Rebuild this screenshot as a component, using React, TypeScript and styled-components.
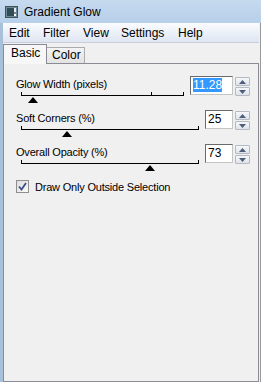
import React from 'react'
import styled, { createGlobalStyle } from 'styled-components'

const GlobalStyle = createGlobalStyle`
	html, body {
		margin: 0;
		padding: 0;
		background: #f0f0f0;
	}
	body {
		font-family: 'Liberation Sans', Arial, sans-serif;
	}
`

const Window = styled.div`
	width: 261px;
	height: 382px;
	display: flex;
	flex-direction: column;
	overflow: hidden;
	background: #f0f0f0;
`

const TitleBar = styled.div`
	height: 23px;
	flex: none;
	display: flex;
	align-items: center;
	gap: 6px;
	padding-left: 5px;
	background: linear-gradient(#c6daef, #b7cfe9);
	font-size: 12px;
	color: #000;
`

const Frame = styled.div`
	flex: 1;
	display: flex;
	flex-direction: column;
	border-left: 3px solid #a9c0da;
	border-right: 1px solid #9a9a9a;
	padding-right: 1px;
	min-height: 0;
`

const MenuBar = styled.div`
	height: 19px;
	flex: none;
	display: flex;
	align-items: center;
	border-bottom: 1px solid #c9cfdc;
	background: linear-gradient(#fbfcfe, #e9eef7 60%, #dfe6f2);
	font-size: 12px;
`

const MenuItem = styled.span<{ $w: number }>`
	width: ${(p) => p.$w}px;
	padding-left: 6px;
	box-sizing: border-box;
`

const TabStrip = styled.div`
	height: 19px;
	margin-top: 1px;
	flex: none;
	display: flex;
	align-items: flex-end;
`

const Tab = styled.div<{ $active?: boolean; $w: number }>`
	position: relative;
	z-index: ${(p) => (p.$active ? 1 : 0)};
	box-sizing: border-box;
	width: ${(p) => p.$w}px;
	height: ${(p) => (p.$active ? 20 : 16)}px;
	margin-bottom: ${(p) => (p.$active ? -1 : 0)}px;
	border: 1px solid ${(p) => (p.$active ? '#898c95' : '#acacac')};
	border-bottom: ${(p) => (p.$active ? 'none' : '0')};
	border-left-width: ${(p) => (p.$active ? 1 : 0)}px;
	background: ${(p) =>
		p.$active ? '#f7f7f7' : 'linear-gradient(#f3f3f3, #e3e3e3)'};
	font-size: 12px;
	padding-left: ${(p) => (p.$active ? 7 : 5)}px;
	line-height: ${(p) => (p.$active ? 17 : 15)}px;
`

const Panel = styled.div`
	flex: 1;
	border: 1px solid #898c95;
	background: #f0f0f0;
	padding: 12px 8px 0 12px;
	display: flex;
	flex-direction: column;
`

const SliderRow = styled.div`
	height: 34px;
	display: flex;
	align-items: flex-start;
`

const SliderSide = styled.div`
	flex: 1;
	display: flex;
	flex-direction: column;
`

const Label = styled.div`
	font-size: 11px;
	letter-spacing: -0.2px;
	line-height: 14px;
	margin-top: 1px;
	color: #000;
`

const Track = styled.div`
	position: relative;
	margin: 1px 0 0 5px;
	height: 3px;
	border: 1px solid #000;
	border-top: none;
`

const Tick = styled.div`
	position: absolute;
	bottom: 0;
	width: 1px;
	height: 3px;
	background: #000;
`

const Thumb = styled.div`
	position: absolute;
	top: 5px;
	margin-left: -5px;
	width: 0;
	height: 0;
	border-left: 5px solid transparent;
	border-right: 5px solid transparent;
	border-bottom: 6px solid #000;
`

const EditBox = styled.div<{ $w: number }>`
	box-sizing: border-box;
	width: ${(p) => p.$w}px;
	height: 19px;
	margin-left: 6px;
	border: 1px solid;
	border-color: #6a6a6a #c4c4c4 #c4c4c4 #6a6a6a;
	background: #fff;
	font-size: 12px;
	line-height: 16px;
	padding-left: 2px;
`

const Selected = styled.span`
	background: #3399ff;
	color: #fff;
`

const Spin = styled.div`
	width: 15px;
	margin: 1px 0 0 2px;
	display: flex;
	flex-direction: column;
	gap: 1px;
`

const SpinButton = styled.div`
	height: 7px;
	border: 1px solid #b4bac3;
	border-radius: 1px;
	background: linear-gradient(#f6f7f9, #dfe3e9);
	display: flex;
	align-items: center;
	justify-content: center;
`

const CheckRow = styled.div`
	display: flex;
	align-items: center;
	gap: 6px;
	margin-top: 2px;
	font-size: 11px;
	letter-spacing: -0.2px;
`

const CheckBox = styled.div`
	box-sizing: border-box;
	width: 13px;
	height: 13px;
	border: 1px solid #8f8f8f;
	background: linear-gradient(135deg, #dcdcdc, #fbfbfb);
	display: flex;
	align-items: center;
	justify-content: center;
`

function Arrow({ up }: { up?: boolean }) {
	return (
		<svg width="7" height="4" viewBox="0 0 7 4">
			<path d={up ? 'M0 4 L3.5 0 L7 4 Z' : 'M0 0 L3.5 4 L7 0 Z'} fill="#4d5d7a" />
		</svg>
	)
}

type SliderProps = {
	label: string
	pos: number
	ticks?: number[]
	boxWidth: number
	value: string
	selected?: boolean
}

function Slider({ label, pos, ticks = [], boxWidth, value, selected }: SliderProps) {
	return (
		<SliderRow>
			<SliderSide>
				<Label>{label}</Label>
				<Track>
					{ticks.map((t) => (
						<Tick key={t} style={{ left: `${t * 100}%` }} />
					))}
					<Thumb style={{ left: `${pos * 100}%` }} />
				</Track>
			</SliderSide>
			<EditBox $w={boxWidth}>{selected ? <Selected>{value}</Selected> : value}</EditBox>
			<Spin>
				<SpinButton>
					<Arrow up />
				</SpinButton>
				<SpinButton>
					<Arrow />
				</SpinButton>
			</Spin>
		</SliderRow>
	)
}

function AppIcon() {
	return (
		<svg width="13" height="12" viewBox="0 0 13 12">
			<rect x="0.5" y="0.5" width="12" height="11" fill="#6f8a94" stroke="#3c5560" />
			<rect x="2" y="2" width="7" height="8" fill="#2f4c57" />
			<rect x="9" y="2" width="2" height="4" fill="#e8eef0" />
			<rect x="9" y="8" width="2" height="2" fill="#ffffff" />
		</svg>
	)
}

export default function App() {
	return (
		<Window>
			<GlobalStyle />
			<TitleBar>
				<AppIcon />
				<span>Gradient Glow</span>
			</TitleBar>
			<Frame>
				<MenuBar>
					<MenuItem $w={34}>Edit</MenuItem>
					<MenuItem $w={40}>Filter</MenuItem>
					<MenuItem $w={38}>View</MenuItem>
					<MenuItem $w={57}>Settings</MenuItem>
					<MenuItem $w={40}>Help</MenuItem>
				</MenuBar>
				<TabStrip>
					<Tab $active $w={44}>
						Basic
					</Tab>
					<Tab $w={38}>Color</Tab>
				</TabStrip>
				<Panel>
					<Slider
						label="Glow Width (pixels)"
						pos={0.068}
						ticks={[0.8]}
						boxWidth={43}
						value="11.28"
						selected
					/>
					<Slider label="Soft Corners (%)" pos={0.256} boxWidth={28} value="25" />
					<Slider label="Overall Opacity (%)" pos={0.73} boxWidth={28} value="73" />
					<CheckRow>
						<CheckBox>
							<svg width="9" height="9" viewBox="0 0 9 9">
								<path
									d="M1 4.5 L3.5 7.5 L8 1"
									fill="none"
									stroke="#3c4f8c"
									strokeWidth="1.8"
								/>
							</svg>
						</CheckBox>
						<span>Draw Only Outside Selection</span>
					</CheckRow>
				</Panel>
			</Frame>
		</Window>
	)
}
